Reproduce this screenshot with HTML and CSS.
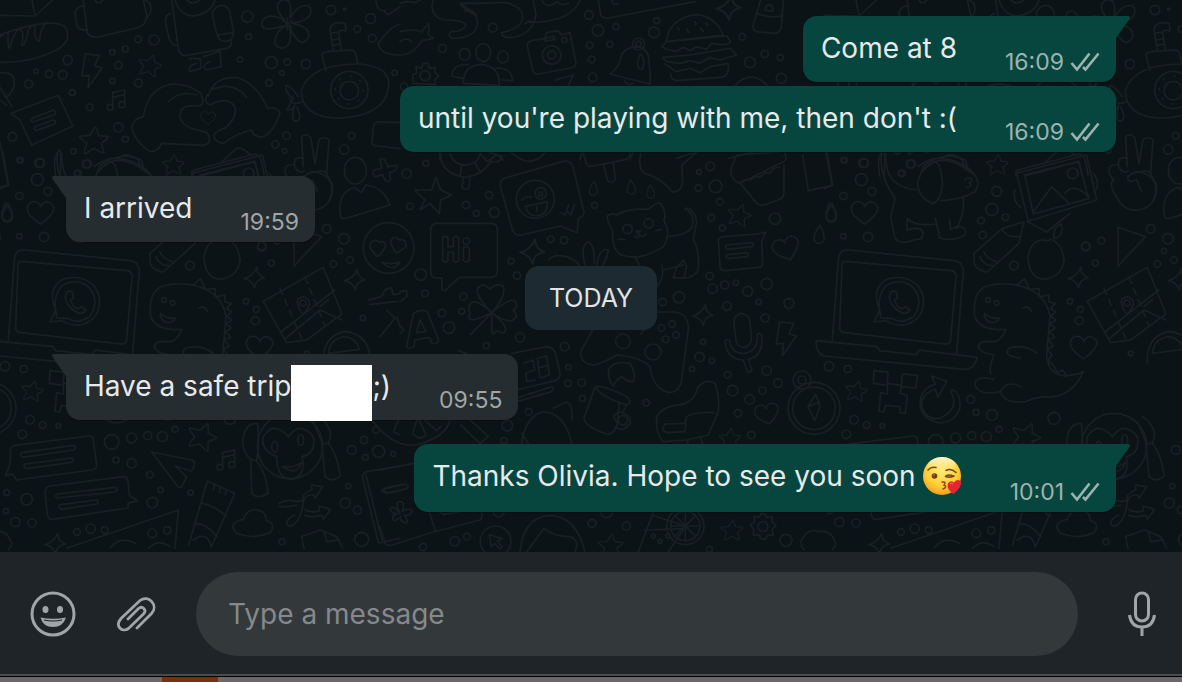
FILE: index.html
```html
<!DOCTYPE html>
<html lang="en">
<head>
<meta charset="utf-8">
<meta name="viewport" content="width=device-width, initial-scale=1">
<title>Chat</title>
<link rel="stylesheet" href="styles.css">
</head>
<body>
<svg class="defs" width="0" height="0" aria-hidden="true">
  <defs>
    <symbol id="ticks" viewBox="0 0 30 20"><path d="M1.5 11l5.500 6.500L19.500 1.500M13 15l2.500 2.500L28.500 1.500" fill="none" stroke="currentColor" stroke-width="2.600"/></symbol>
    <symbol id="tail" viewBox="0 0 14 22"><path d="M14 0H2Q-1 0 .5 3L14 22Z" fill="currentColor"/></symbol>
    <path id="star" d="M4-40Q7-40 14-13L42-10Q46-6 22 10L30 38Q26 42 0 25L-27 42Q-32 38-21 10L-44-8Q-42-14-13-13Z"/>
    <path id="spark" d="M8-32Q8-8 31 0Q4 4 2 30Q-6 6-30 2Q-2-6 8-32Z"/>
    <path id="heart" d="M0 34Q-42 8-40-14Q-36-38-12-32Q-2-28 0-18Q8-34 24-32Q44-24 38-6Q30 14 0 34Z"/>
    <path id="drop" d="M5-26Q22 4 16 20Q8 32-8 26Q-22 10 5-26Z"/>
    <path id="bolt" d="M-16-50L26-46 12-14 34-8-8 52-4 14-26 16Z"/>
    <g id="note"><path d="M-12 20V-22L24-30V12M-12-8L24-16"/><circle cx="-20" cy="22" r="9"/><circle cx="16" cy="14" r="9"/></g>
    <g id="tile">
      <g transform="scale(.3333)">
        <path d="M0 46L105 48 158 0M105 48L96 0M0 105Q150 50 195 80Q220 120 170 150Q90 190 0 187M0 112Q20 90 25 100Q22 140 28 145Q45 90 58 88Q75 90 65 135Q75 140 85 90Q100 70 105 80Q100 120 118 124Q120 90 135 72"/>
        <path d="M250 0L262 100Q275 115 300 110L410 84Q440 78 440 45L430 0M252 18Q220 20 226 50L232 80Q240 92 262 90M435 0Q460 10 450 40L440 55M285 0Q295 18 310 0"/>
        <path d="M515 0L536 150Q540 168 560 166L680 145Q698 140 694 122M512 40Q492 45 498 75L508 118Q520 140 530 136M525 0Q540 46 580 48Q635 40 645 0M560 0Q575 18 600 0M645 25Q670 5 688 30L700 90Q704 118 680 124Q655 125 650 100L638 50Q636 35 645 25M655 105L698 98M568 176H600L604 205 570 214Q560 200 590 190M610 170L660 154 664 200 620 210Q600 200 630 184"/>
        <path d="M855 60Q815 20 845 0Q880-10 870 54Q900 5 930 20Q945 60 875 70Q935 80 925 115Q900 150 868 80Q880 135 850 145Q800 140 848 78Q780 100 786 65Q800 35 855 60M848 62L876 82M876 62L848 84M862 54V90"/>
        <path d="M1135 130Q1170 80 1200 72M1135 130Q1140 165 1200 165M1128 0Q1130 35 1155 32Q1160 50 1175 38L1200 20"/>
        <path d="M904 272Q930 190 1080 192Q1170 200 1166 255Q1160 350 1010 354Q905 350 904 272ZM978 212L966 165Q968 155 990 154L1055 150Q1070 152 1072 192M1000 152L990 85Q1000 62 1035 70Q1040 85 1036 95M1024 150L1016 96Q1020 88 1038 92M992 100L1018 96M996 120L1020 116M998 136L1022 132M896 290Q865 250 858 258Q855 280 880 295Q865 320 862 330Q880 330 884 316Q870 360 888 364Q910 360 890 320M868 296Q880 318 904 306"/>
        <circle cx="1048" cy="270" r="56"/><circle cx="1048" cy="272" r="28"/><circle cx="1048" cy="270" r="42" stroke-dasharray="4 29"/>
        <path d="M430 350Q445 260 520 252Q580 255 605 285Q615 320 595 318Q540 310 540 350Q545 375 575 385L622 398Q640 430 610 436L485 430Q475 455 450 455Q400 420 396 380Q400 355 430 350M505 306Q540 270 590 285M625 288Q640 230 710 232Q770 250 803 325Q835 320 840 340Q820 400 785 412Q760 410 755 390Q710 400 670 430Q640 425 642 405Q650 390 675 385Q710 355 706 325Q690 285 630 314Q610 310 622 284M632 270Q700 240 740 292"/>
        <use href="#heart" transform="translate(625 354) scale(.58)"/>
        <path d="M33 340L175 286 218 378 95 436 60 360ZM98 355L160 330Q175 336 160 346L98 366Q90 362 98 355ZM105 380L160 360Q175 364 160 374L108 392Q98 386 105 380ZM0 218Q50 215 42 260Q30 290 14 292M0 262L36 320M0 300L20 316"/>
        <use href="#bolt" transform="translate(272 212)"/><use href="#note" transform="translate(350 300)"/><use href="#star" transform="translate(282 420)"/><use href="#star" transform="translate(450 195) scale(.8) rotate(14)"/><use href="#star" transform="translate(520 493) scale(.75)"/>
        <path d="M0 425L24 555 0 566M168 530Q155 470 180 448Q185 480 180 530M290 520Q350 440 450 525M355 475Q380 450 415 480L425 510M575 525Q572 510 590 508L765 462Q785 460 792 525M600 525L765 484 774 525M660 490L710 445Q725 440 750 464"/>
        <path d="M910 500L905 410Q918 398 932 412L945 490 957 420Q970 405 987 420L980 520Q1010 570 985 605M910 475Q880 465 884 500Q898 525 912 512M884 495Q850 490 856 520L870 545M930 520Q970 505 980 520"/>
        <ellipse cx="1066" cy="512" rx="33" ry="40"/><path d="M1022 650Q1010 580 1062 562L1085 578 1098 555Q1150 560 1170 615L1035 656Q1022 656 1022 650M1122 510L1145 505 1140 478Q1155 468 1163 500L1190 496Q1194 514 1168 518L1172 540Q1160 556 1148 524L1125 530Q1114 520 1122 510M1200 368L1135 366Q1120 368 1120 382L1116 430Q1118 438 1135 438L1200 446"/>
        <use href="#drop" transform="translate(20 638)"/><use href="#heart" transform="translate(122 638)"/>
        <circle cx="462" cy="120" r="15"/><circle cx="414" cy="118" r="10"/><circle cx="376" cy="147" r="9"/><circle cx="337" cy="157" r="8"/><circle cx="355" cy="196" r="11"/><circle cx="203" cy="180" r="14"/><circle cx="188" cy="224" r="13"/><circle cx="147" cy="222" r="11"/><circle cx="108" cy="214" r="7"/><circle cx="86" cy="252" r="12"/><circle cx="217" cy="278" r="9"/><circle cx="337" cy="242" r="8"/><circle cx="415" cy="249" r="12"/><circle cx="269" cy="322" r="10"/><circle cx="355" cy="382" r="14"/><circle cx="376" cy="418" r="9"/><circle cx="37" cy="410" r="13"/><circle cx="58" cy="481" r="8"/><circle cx="118" cy="489" r="14"/><circle cx="112" cy="539" r="18"/><circle cx="220" cy="454" r="8"/><circle cx="259" cy="492" r="12"/><circle cx="232" cy="520" r="9"/><circle cx="144" cy="574" r="12"/><circle cx="58" cy="588" r="11"/><circle cx="58" cy="709" r="8"/><circle cx="132" cy="711" r="14"/><circle cx="742" cy="50" r="17"/><circle cx="746" cy="110" r="9"/><circle cx="720" cy="178" r="8"/><circle cx="814" cy="188" r="18"/><circle cx="862" cy="186" r="10"/><circle cx="918" cy="192" r="14"/><circle cx="846" cy="219" r="7"/><circle cx="807" cy="249" r="10"/><circle cx="993" cy="30" r="14"/><circle cx="1034" cy="28" r="4"/><circle cx="1112" cy="56" r="15"/><circle cx="1072" cy="87" r="10"/><circle cx="1117" cy="115" r="12"/><circle cx="1184" cy="218" r="8"/><circle cx="860" cy="407" r="11"/><circle cx="826" cy="433" r="11"/><circle cx="854" cy="452" r="7"/><circle cx="1055" cy="407" r="10"/><circle cx="1033" cy="449" r="14"/><circle cx="980" cy="686" r="13"/><circle cx="1032" cy="716" r="16"/><circle cx="785" cy="740" r="13"/><circle cx="832" cy="722" r="10"/>
      </g>
      <g transform="translate(0 240) scale(.3333)">
        <path d="M25 300L44 50Q50 28 75 30L390 62Q418 66 418 95L398 340M62 64L382 92Q398 96 396 110L380 300Q376 314 364 312L62 278Q46 276 47 262L54 76Q55 62 62 64M-24 302L160 320 166 332 278 344 284 330 460 352Q450 390 420 388L0 348Q-24 340-24 302Z"/>
        <path d="M150 246L168 210Q140 150 185 120Q235 98 280 135Q315 180 285 230Q240 275 185 242ZM170 228Q155 165 190 134Q230 112 268 142Q300 185 270 228Q235 255 205 236L170 234ZM200 158Q212 146 218 160L220 174 212 182Q220 204 236 206L244 200 258 210Q252 222 236 220Q198 200 196 172Z"/>
        <path d="M546 268Q530 310 500 305Q465 300 463 322Q470 340 510 345Q495 380 500 402M546 268Q470 275 452 230Q445 150 490 138Q560 120 620 150Q670 175 678 230L668 345Q670 400 720 408Q760 404 778 395Q740 480 655 470Q630 475 600 486Q540 490 530 455Q460 470 452 430Q460 405 510 418M530 455Q545 420 592 440M640 340Q600 310 555 325Q535 350 590 354M482 220Q505 240 526 234Q520 252 495 246Q480 236 482 220M597 204Q612 196 622 214M580 134L602 116 615 146M618 148L645 145 646 166M650 170L674 165 674 185 694 190 680 206 696 215 680 228 696 240 678 252 694 264 676 276 692 290 674 300 688 318 670 326 684 346 672 360 690 378 700 398 716 390 728 408"/>
        <circle cx="492" cy="180" r="7"/><circle cx="518" cy="188" r="7"/>
        <path d="M450 60Q450 90 490 96L585 10 600-55 535-35 450 40ZM468 50Q475 75 510 78M480 36Q490 58 520 66M535-35Q540-15 566-10L590-10M660 0Q620 0 612 50Q615 115 660 118Q715 110 720 60Q715 10 680-2Q670 6 660 0M690-4Q685-40 712-48Q720-10 690-4M882-38L965-10 882 78Z"/>
        <path d="M790 184L970 82 1026 222 920 300 860 308ZM845 274L1004 150M858 294L960 210 1026 240M960 200L985 180"/><path d="M840 145L905 296M915 112L975 256" stroke-dasharray="20 16"/><circle cx="909" cy="189" r="9"/><path d="M909 222Q885 195 895 176Q915 165 928 182Q930 205 909 222"/>
        <use href="#spark" transform="translate(762 114)"/><use href="#spark" transform="translate(1064 120)"/><use href="#heart" transform="translate(779 322)"/>
        <path d="M970 370L970 345Q980 280 1040 274Q1100 285 1110 345L1085 375M985 340Q990 295 1035 290Q1070 295 1078 328ZM1105 180L1145 170Q1155 140 1175 145L1180 165 1200 160M1110 194L1190 184M1160 210L1185 235 1140 290M1190 230L1200 260"/>
        <circle cx="1166" cy="24" r="76"/><path d="M1132 50Q1100 20 1115 5Q1130-5 1137 8Q1152-2 1158 16Q1150 38 1132 50M1190 40Q1165 10 1178-5Q1190-12 1197 0Q1220-5 1218 20ZM1145 66Q1170 76 1200 66Q1180 100 1145 66"/>
        <use href="#star" transform="translate(97 452) scale(.75) rotate(10)"/><path d="M150 392L192 396 190 436 148 430ZM235 402L280 406 276 444 232 440ZM190 430L232 436 228 460 250 466 244 520 228 518 228 500 184 496 180 516 165 514 170 458 190 462Z"/>
        <circle cx="-30" cy="505" r="78"/><circle cx="-30" cy="505" r="64"/><circle cx="-66" cy="420" r="27"/><circle cx="-66" cy="420" r="12"/><path d="M-25 462L-48 500-28 542-12 500ZM-48 500L-12 485"/>
        <path d="M322 408L368 424 342 472 334 448Q292 460 292 500Q310 544 350 534Q400 510 386 466Q376 450 386 450Q410 458 408 505Q390 552 340 548Q280 530 290 475Q300 440 334 432Z"/>
        <path d="M32 640Q26 620 45 616L265 588Q280 586 280 600L290 676Q290 688 275 690L50 720 38 702 16 706Q32 680 32 640M65 638L220 616Q234 622 220 630L68 652Q56 646 65 638M75 672L215 654Q226 660 212 668L78 686Q68 680 75 672M135 760Q134 742 150 738L370 710Q382 710 384 724L388 766 412 782 384 790 384 804 158 838Q144 840 142 822ZM172 762L345 742Q358 748 345 756L172 774Q162 768 172 762M180 794L290 780Q300 786 290 792L184 808Q172 802 180 794"/>
        <use href="#star" transform="translate(607 588) rotate(18)"/><use href="#note" transform="translate(680 660)"/><path d="M455 636L575 660Q588 664 582 680L574 694 526 678 560 712 545 740Q538 745 532 738Z"/>
        <circle cx="870" cy="618" r="98"/><path d="M830 650Q780 630 790 590Q820 540 866 590Q900 540 940 590Q950 640 906 650Q920 700 880 718Q830 720 830 650M848 680Q880 685 904 668Q890 710 848 680M772 550Q730 550 728 610Q735 660 770 662Q780 610 772 550M752 662L755 760Q775 780 804 760Q800 700 770 662M940 545L968 610Q990 620 992 580Q980 540 955 530M966 612L975 710Q1000 730 1020 708Q1015 650 985 608"/>
        <ellipse cx="824" cy="620" rx="9" ry="16"/><ellipse cx="902" cy="600" rx="9" ry="16"/>
        <path d="M622 724L704 760 635 920M622 724L566 915M645 732L640 750M662 740L658 758M680 748L675 765M606 790Q640 795 680 830M584 850Q620 850 650 890M580 900Q620 870 634 920M710 880Q680 850 730 838Q745 800 780 812Q800 820 798 842Q830 850 810 878Q760 900 710 880M838 790Q860 775 890 785L908 782Q905 760 935 750L935 735 968 740 945 775 940 765Q910 760 908 800Q895 860 865 858Q850 840 885 825M838 800Q880 800 890 795M915 810Q940 820 958 812L958 798 992 808 970 838 965 826Q930 835 915 825M200 925L535 810 525 925M905 890L960 870 1010 890 1028 925M905 890L912 925M972 874L980 905 1018 900M330 925Q360 885 405 910M445 925Q475 895 510 920"/>
        <use href="#spark" transform="translate(165 912)"/><path d="M1200 678L1100 695Q1086 700 1088 715L1136 910 1200 895M1098 705L1148 908M1145 750Q1150 742 1200 735M1145 750Q1145 764 1200 752"/>
        <path d="M-60 930Q-78 905-60 890Q-45 865-20 874Q20 870 30 900Q42 910 25 930"/>
        <circle cx="570" cy="77" r="13"/><circle cx="785" cy="18" r="12"/><circle cx="814" cy="69" r="9"/><circle cx="738" cy="184" r="8"/><circle cx="769" cy="208" r="9"/><circle cx="766" cy="242" r="12"/><circle cx="1000" cy="72" r="10"/><circle cx="1050" cy="60" r="10"/><circle cx="1020" cy="33" r="8"/><circle cx="1089" cy="234" r="8"/><circle cx="920" cy="340" r="7"/><circle cx="15" cy="379" r="14"/><circle cx="71" cy="387" r="11"/><circle cx="90" cy="539" r="13"/><circle cx="128" cy="555" r="10"/><circle cx="175" cy="557" r="7"/><circle cx="67" cy="583" r="13"/><circle cx="440" cy="478" r="12"/><circle cx="456" cy="517" r="9"/><circle cx="504" cy="525" r="16"/><circle cx="335" cy="606" r="22"/><circle cx="395" cy="594" r="15"/><circle cx="443" cy="587" r="12"/><circle cx="487" cy="590" r="15"/><circle cx="525" cy="568" r="9"/><circle cx="348" cy="660" r="9"/><circle cx="395" cy="670" r="14"/><circle cx="450" cy="704" r="10"/><circle cx="482" cy="750" r="8"/><circle cx="572" cy="758" r="8"/><circle cx="457" cy="788" r="16"/><circle cx="20" cy="758" r="9"/><circle cx="80" cy="778" r="17"/><circle cx="18" cy="813" r="8"/><circle cx="46" cy="846" r="14"/><circle cx="96" cy="849" r="12"/><circle cx="231" cy="876" r="10"/><circle cx="272" cy="866" r="14"/><circle cx="314" cy="870" r="10"/><circle cx="457" cy="880" r="13"/><circle cx="502" cy="871" r="11"/><circle cx="690" cy="535" r="18"/><circle cx="1128" cy="570" r="10"/><circle cx="1092" cy="600" r="11"/><circle cx="1055" cy="630" r="13"/><circle cx="1136" cy="634" r="18"/><circle cx="1096" cy="652" r="9"/><circle cx="1180" cy="642" r="7"/><circle cx="1045" cy="738" r="8"/><circle cx="1036" cy="789" r="15"/><circle cx="1072" cy="810" r="12"/><circle cx="846" cy="905" r="9"/><circle cx="1085" cy="898" r="21"/>
      </g>
      <g transform="translate(-44 0) scale(.3333)">
        <path d="M68 465L85 572 158 556 140 455M305 460Q295 520 345 595Q340 620 332 650L345 715Q360 735 395 722L425 715Q438 685 405 685L380 690 382 655Q400 680 466 672M466 655L480 715Q520 725 555 705Q565 680 530 680L512 688 508 660M530 685Q555 640 550 592M318 460Q310 560 410 570M415 500Q470 450 560 500Q610 540 585 575Q540 600 482 602M430 500Q480 450 488 550Q480 610 455 610Q415 590 412 550ZM470 476Q510 460 556 480L566 512M555 540Q560 530 575 536Q580 545 568 548Q580 560 560 562"/>
        <use href="#drop" transform="translate(155 635) scale(-1 1)"/><use href="#drop" transform="translate(115 702)"/><path d="M710 520L920 465 950 600 745 664ZM735 528L896 485 926 596 760 642ZM760 635L815 560 865 608M855 580Q880 545 926 590M705 570Q695 600 722 622M740 664L800 696 870 640M940 520Q960 545 948 570"/><circle cx="878" cy="520" r="16"/>
        <path d="M1010 590Q985 560 1000 535M1010 590Q1030 635 1075 630Q1130 620 1130 560Q1120 520 1070 515Q1030 530 1050 545L1070 540 1085 575"/>
        <circle cx="194" cy="481" r="9"/><circle cx="253" cy="489" r="13"/><circle cx="394" cy="492" r="12"/><circle cx="366" cy="520" r="10"/><circle cx="650" cy="574" r="15"/><circle cx="636" cy="628" r="18"/><circle cx="603" cy="662" r="10"/><circle cx="676" cy="652" r="10"/><circle cx="608" cy="705" r="11"/>
      </g>
      <g transform="translate(400 0) scale(.3333)">
        <path d="M100 0Q85 45 130 60Q190 60 198 75Q190 95 155 95Q140 105 155 115Q220 115 230 80Q240 50 210 30L180 10Q240 10 320 8Q380 25 365 65Q350 90 305 98Q305 115 340 112Q400 100 408 45L400 0M180 10Q195 35 230 45M380 65Q430 72 490 50Q530 30 540 0M425 0Q440 30 470 5Q485 20 505 10M0 10L20 5 45 8 60 0M0 95Q40 85 65 95L85 70 88 90Q75 100 100 115L65 122Q40 165 0 165M0 125Q20 110 35 125M195 35Q215 20 228 48M375 72Q385 60 396 65"/>
        <path d="M595 0L602 45Q610 55 625 54L885 5M635 0Q640 20 655 10M798 125L806 95Q830 50 890 44Q945 48 970 105ZM785 140L800 125 980 108 992 125Q985 140 935 130L920 148 890 140 870 152 850 142 830 154 800 148ZM788 172L870 165 990 145 1010 165 960 180 930 172 900 190 870 182 840 190 800 185ZM795 192L830 215 870 205 900 218 930 200 985 190Q990 230 960 232L830 242Q810 238 812 220M833 82L838 90M862 88L866 98M885 65L888 74M902 85L910 94M918 70L924 76"/>
        <use href="#spark" transform="translate(985 24) scale(1.2)"/><path d="M1082 0L1060 75Q1055 95 1080 96L1125 100Q1142 98 1144 80L1150 0M1068 40Q1105 55 1148 48M1096 30Q1095 15 1110 14Q1122 20 1118 34Z"/>
        <path d="M382 140Q380 126 395 122L435 115 440 98 475 92 484 105 510 98 528 190Q526 202 512 204L415 222Q400 222 398 210ZM432 118L462 108 464 118 436 124Z"/><circle cx="455" cy="165" r="28"/><circle cx="455" cy="165" r="12"/><circle cx="493" cy="120" r="8"/>
        <path d="M630 222Q660 200 665 165Q680 140 710 140Q750 145 748 195Q752 230 750 252ZM720 162Q738 170 728 208Q708 208 714 180ZM672 240Q680 260 700 250"/><circle cx="716" cy="132" r="18"/><circle cx="716" cy="132" r="8"/>
        <ellipse cx="250" cy="158" rx="22" ry="27"/><ellipse cx="194" cy="163" rx="16" ry="18"/><ellipse cx="309" cy="171" rx="16" ry="18"/><path d="M190 250Q190 195 245 193Q300 200 298 256ZM190 236L155 228Q160 190 206 194M286 205Q335 200 338 242L305 240M38 225L50 218 48 200 65 205 70 190 85 190 88 205 105 202 104 218 116 228 104 240 106 254 40 250Z"/><circle cx="75" cy="227" r="15"/>
        <path d="M1005 258Q1050 205 1105 258M465 240L520 225 505 258M240 460L262 485 290 465 310 480M120 460V480M545 456L540 480M700 456L690 480M830 475L890 456M985 475L1060 456"/>
        <circle cx="567" cy="45" r="13"/><circle cx="594" cy="91" r="17"/><circle cx="648" cy="80" r="9"/><circle cx="569" cy="136" r="10"/><circle cx="630" cy="133" r="9"/><circle cx="575" cy="178" r="10"/><circle cx="578" cy="232" r="13"/><circle cx="762" cy="97" r="16"/><circle cx="770" cy="62" r="9"/><circle cx="278" cy="83" r="13"/><circle cx="127" cy="145" r="12"/><circle cx="1027" cy="110" r="10"/><circle cx="1050" cy="187" r="16"/><circle cx="1094" cy="162" r="11"/><circle cx="1141" cy="173" r="9"/><circle cx="1144" cy="235" r="15"/><circle cx="12" cy="260" r="11"/>
      </g>
      <g transform="translate(400 150) scale(.3333)">
        <path d="M122 10Q120 70 195 82Q250 75 275 30M150 10Q160 48 200 45Q235 40 242 10M270 8L308 20Q300 40 272 35M190 82L186 112Q196 125 208 112L210 82M185 45L180 78M225 38L240 66M335 8Q390 60 435 8M550 10L560 42Q565 52 580 48L680 28Q692 20 690 5M612 46L622 90Q635 105 646 88L640 40M722 10Q710 70 750 75Q795 95 815 125Q845 130 848 90L845 45 890 8"/>
        <path d="M44 120L95 120 108 82 122 120 155 135 122 150 118 190 90 160 60 180 75 150Z"/><path d="M300 105Q300 90 315 84L490 34Q510 30 518 48L552 185Q552 200 535 205L532 248 480 228 360 256Q345 256 338 242ZM366 150Q380 135 395 142M376 170L442 155Q445 195 410 198Q385 198 376 170M410 185V170M482 188L495 196 506 165M504 186L512 196 524 164"/><circle cx="406" cy="148" r="57"/><circle cx="422" cy="130" r="17"/><circle cx="422" cy="132" r="6"/>
        <path d="M650 195Q680 175 745 178Q770 155 780 160Q800 180 792 212Q815 250 790 290Q720 335 665 315Q635 300 638 245Q615 200 625 195Q640 190 650 195M800 260Q870 255 878 225Q885 190 855 178Q865 165 885 195L890 215 880 270Q900 300 894 360Q880 392 820 382Q825 355 850 330L860 350 852 385M705 320L718 345M785 345Q795 385 770 410M790 360L850 345M705 258Q712 270 720 255Q730 265 740 250M708 244L722 242 715 254ZM655 268L675 268M768 242L784 238"/><circle cx="683" cy="237" r="14"/><circle cx="746" cy="220" r="14"/>
        <use href="#drop" transform="translate(578 114) scale(.8)"/><use href="#drop" transform="translate(696 110) scale(-.8 .8)"/><use href="#drop" transform="translate(754 124) scale(-.75 .75)"/>
        <path d="M995 50Q985 85 1020 100L1140 40Q1165 35 1155 10M995 50L1010 15 1140 5M1020 98L1070 160Q1080 168 1095 164L1140 148Q1154 140 1152 120V45M1022 100Q1040 82 1050 92Q1065 75 1080 82Q1095 65 1110 70Q1120 50 1140 52"/><use href="#star" transform="translate(1018 194) scale(.8) rotate(14)"/>
        <path d="M955 270Q955 262 970 260L1075 252 1098 246 1085 275 1088 340Q1088 352 1075 352L975 362Q962 362 960 350ZM980 285L1055 278Q1066 284 1055 290L982 298Q972 292 980 285ZM982 314L1040 308Q1050 315 1040 320L984 326Q974 320 982 314Z"/><use href="#heart" transform="translate(1160 296) rotate(-18)"/>
        <path d="M92 240Q92 220 112 220H275Q292 222 292 238V365Q292 380 275 382H178L135 422 126 420V384H110Q92 382 92 365ZM128 262Q136 256 144 262V290H160V262Q168 256 176 262V332Q168 340 160 332V306H144V332Q136 340 128 332ZM190 294Q200 286 208 294V332Q200 338 190 332Z"/><circle cx="199" cy="274" r="10"/>
        <use href="#spark" transform="translate(396 306) scale(1.200)"/><path d="M445 330Q460 310 500 320Q530 330 540 350M555 345Q540 285 565 275Q585 285 582 340M590 345Q600 290 625 300Q620 330 608 345"/>
        <path d="M275 488Q200 410 255 405L270 418Q285 398 310 408Q320 440 275 488Q350 425 350 470L340 482Q360 500 335 512Q310 515 275 488Q340 540 305 550L292 542Q275 560 275 540V488Q190 530 210 490Q200 465 220 455Q240 455 275 488L212 554M20 590L40 490Q62 475 82 485L116 570Q110 585 95 580L88 562 45 570 42 590Q25 600 20 590M50 548L60 510 78 545Z"/>
        <path d="M0 425L20 422V440L0 455M0 525L12 540 0 550M578 540L542 605Q540 640 580 645Q610 640 650 615Q720 620 750 650Q760 720 810 728Q840 725 845 690L866 530Q860 490 825 486H765M722 552L740 530"/><circle cx="669" cy="574" r="22"/><circle cx="759" cy="606" r="24"/><circle cx="784" cy="534" r="10"/><circle cx="816" cy="522" r="10"/><circle cx="797" cy="568" r="10"/><circle cx="828" cy="555" r="10"/><use href="#spark" transform="translate(908 496)"/><use href="#bolt" transform="translate(1155 566)"/>
        <path d="M1002 520Q1000 495 1025 490Q1048 495 1050 515L1055 570Q1050 590 1030 592Q1010 590 1008 570ZM975 572Q980 565 988 572Q995 610 1030 610Q1075 605 1072 555Q1080 545 1086 555Q1090 620 1045 628L1056 660Q1050 670 1042 664L1030 630Q980 630 975 572M335 610L440 590Q462 592 468 615L480 670Q480 688 465 692L350 720M350 745L455 710Q465 712 455 725L350 755M372 640L400 630 404 660 378 670 380 695 406 690M412 625L440 618 448 675 420 684ZM416 654L444 646M345 640L350 645"/>
        <path d="M625 660Q640 630 690 640Q710 670 700 695Q680 695 665 680Q640 695 642 710Q625 695 625 660M585 712Q600 700 680 740Q700 760 680 765Q610 745 585 712L552 805Q555 830 620 852Q640 855 650 830L658 760M652 818Q630 795 660 786Q695 795 690 820Q670 850 645 830M670 785L680 765"/><circle cx="669" cy="811" r="14"/>
        <path d="M770 800Q790 768 840 764Q880 760 895 710Q920 685 945 700Q960 740 955 785L925 855 860 870 790 875Q765 850 770 800M795 822L855 820 860 800Q880 785 940 788M795 822Q780 840 800 848L855 845 858 820M864 870L862 890M900 862L910 885"/><use href="#heart" transform="translate(1102 792) rotate(-12) scale(.9)"/><use href="#star" transform="translate(990 865) scale(.75)"/>
        <path d="M365 882Q375 800 430 785Q495 790 515 880M460 775L500 755Q520 765 515 810M365 850L385 880M182 825L240 880M210 810L265 860 240 880M-85 810Q0 920 90 870Q140 850 150 810M-5 812L-20 845 0 855M50 812L38 850Q60 875 78 855L58 812M75 812L110 842 122 830M175 602L202 612"/>
        <circle cx="20" cy="71" r="14"/><circle cx="78" cy="40" r="9"/><circle cx="30" cy="169" r="10"/><circle cx="267" cy="136" r="11"/><circle cx="198" cy="165" r="11"/><circle cx="229" cy="190" r="9"/><circle cx="283" cy="187" r="15"/><circle cx="584" cy="166" r="9"/><circle cx="931" cy="49" r="13"/><circle cx="897" cy="66" r="7"/><circle cx="896" cy="114" r="10"/><circle cx="947" cy="109" r="19"/><circle cx="960" cy="155" r="10"/><circle cx="934" cy="203" r="10"/><circle cx="967" cy="234" r="9"/><circle cx="1125" cy="206" r="17"/><circle cx="452" cy="268" r="10"/><circle cx="492" cy="271" r="11"/><circle cx="333" cy="333" r="9"/><circle cx="351" cy="377" r="11"/><circle cx="62" cy="374" r="17"/><circle cx="75" cy="430" r="10"/><circle cx="190" cy="440" r="11"/><circle cx="185" cy="484" r="9"/><circle cx="126" cy="489" r="11"/><circle cx="147" cy="533" r="17"/><circle cx="360" cy="562" r="14"/><circle cx="259" cy="587" r="9"/><circle cx="494" cy="590" r="13"/><circle cx="929" cy="378" r="11"/><circle cx="938" cy="416" r="14"/><circle cx="974" cy="405" r="12"/><circle cx="1008" cy="398" r="8"/><circle cx="1043" cy="424" r="15"/><circle cx="1100" cy="402" r="17"/><circle cx="981" cy="468" r="13"/><circle cx="1076" cy="456" r="8"/><circle cx="1095" cy="504" r="12"/><circle cx="1167" cy="460" r="15"/><circle cx="837" cy="442" r="17"/><circle cx="788" cy="456" r="11"/><circle cx="909" cy="575" r="8"/><circle cx="899" cy="621" r="14"/><circle cx="936" cy="632" r="8"/><circle cx="876" cy="657" r="8"/><circle cx="983" cy="674" r="10"/><circle cx="998" cy="722" r="16"/><circle cx="1049" cy="748" r="14"/><circle cx="1100" cy="662" r="14"/><circle cx="1134" cy="699" r="13"/><circle cx="1088" cy="722" r="11"/><circle cx="1014" cy="790" r="11"/><circle cx="1054" cy="855" r="11"/><circle cx="739" cy="758" r="10"/><circle cx="505" cy="652" r="8"/><circle cx="504" cy="700" r="10"/><circle cx="545" cy="698" r="11"/><circle cx="547" cy="745" r="9"/><circle cx="386" cy="785" r="10"/><circle cx="322" cy="827" r="16"/><circle cx="312" cy="872" r="9"/>
      </g>
      <g transform="translate(380 400) scale(.3333)">
        <path d="M0 210L102 190M15 266L75 252Q92 258 80 266L22 280Q8 278 15 266M0 380L15 430Q20 438 35 436L160 396 300 360Q308 356 304 335M148 335L166 392M180 335L190 343 240 335M60 340Q40 300 65 306Q75 312 66 334Q95 320 96 335Q90 350 72 345Q90 370 75 368Q60 365 62 350Q40 370 38 355Q40 340 54 342Q20 335 35 322Q45 320 60 340"/><circle cx="347" cy="424" r="46"/><path d="M328 404L366 416 352 424 366 442 358 446 344 430 334 440Z"/>
        <path d="M420 456Q430 350 510 346Q590 350 615 456M440 456L492 385Q520 410 570 410Q600 420 585 456M820 336L775 456M795 390L912 386 865 456M815 345L905 375"/><circle cx="916" cy="378" r="56"/><circle cx="916" cy="378" r="44"/><path d="M916 334V422M872 378H960M885 347L947 409M947 347L885 409"/><circle cx="820" cy="408" r="6"/><circle cx="864" cy="408" r="6"/><circle cx="840" cy="424" r="6"/>
        <use href="#star" transform="translate(692 436) scale(.85)"/><use href="#star" transform="translate(1056 390) scale(.75)"/><path d="M1112 375L1124 366 1122 350 1138 352 1144 340 1156 342 1160 354 1176 350 1176 366 1188 376 1176 388 1180 406 1164 404 1156 418 1142 416 1138 404 1120 406 1122 390Z"/><circle cx="1149" cy="380" r="15"/>
        <circle cx="129" cy="441" r="11"/><circle cx="224" cy="424" r="14"/><circle cx="261" cy="410" r="10"/><circle cx="356" cy="335" r="16"/><circle cx="636" cy="370" r="12"/><circle cx="739" cy="378" r="12"/><circle cx="680" cy="335" r="18"/><circle cx="1218" cy="421" r="18"/><circle cx="988" cy="448" r="9"/>
      </g>
    </g>
  </defs>
</svg>

<main class="chat">
  <svg class="wallpaper" aria-hidden="true"><use href="#tile"/><use href="#tile" x="824"/><use href="#tile" x="1648"/></svg>
  <div class="messages">
    <article class="bubble out tailed">
      <svg class="tail" aria-hidden="true"><use href="#tail"/></svg>
      <p>Come at 8</p>
      <span class="meta"><time>16:09</time><svg class="ticks" role="img" aria-label="Delivered"><use href="#ticks"/></svg></span>
    </article>
    <article class="bubble out next">
      <p>until you're playing with me, then don't :(</p>
      <span class="meta"><time>16:09</time><svg class="ticks" role="img" aria-label="Delivered"><use href="#ticks"/></svg></span>
    </article>
    <article class="bubble in tailed">
      <svg class="tail" aria-hidden="true"><use href="#tail"/></svg>
      <p>I arrived</p>
      <span class="meta"><time>19:59</time></span>
    </article>
    <h2 class="day">TODAY</h2>
    <article class="bubble in tailed">
      <svg class="tail" aria-hidden="true"><use href="#tail"/></svg>
      <p>Have a safe trip<span class="mask"></span>;)</p>
      <span class="meta"><time>09:55</time></span>
    </article>
    <article class="bubble out tailed tall">
      <svg class="tail" aria-hidden="true"><use href="#tail"/></svg>
      <p>Thanks Olivia. Hope to see you soon
        <svg class="emoji" viewBox="0 0 40 40" role="img" aria-label="Face blowing a kiss">
          <defs>
            <radialGradient id="face" cx=".5" cy=".35" r=".68"><stop offset="0" stop-color="#ffea72"/><stop offset=".65" stop-color="#fecb35"/><stop offset="1" stop-color="#ee951a"/></radialGradient>
            <linearGradient id="shine" x2="0" y2="1"><stop offset="0" stop-color="#fff8d6"/><stop offset="1" stop-color="#ffe771" stop-opacity="0"/></linearGradient>
          </defs>
          <circle cx="20" cy="20" r="19" fill="url(#face)"/><ellipse cx="20" cy="10" rx="14" ry="9" fill="url(#shine)"/>
          <circle cx="12.500" cy="20" r="2.800" fill="#6c4310"/><circle cx="11.800" cy="19" r=".8" fill="#b98a3a"/>
          <g fill="none" stroke="#75470e" stroke-linecap="round"><path d="M6 14Q9 10.500 14 11.500M24 14.500Q29 12 34 16.500" stroke-width="1.500"/><path d="M23.500 20.500Q28 22 32 20M24 20Q27 18 31 20" stroke-width="1.600"/><path d="M20 26Q25 25.500 22 29Q26 31 21 33" stroke="#9c3b0c" stroke-width="1.400"/></g>
          <path d="M31.500 38Q24 33 26 27.500Q28.500 23.500 32 26.500Q35 22.500 38.500 25Q41.500 29.500 31.500 38" fill="#e32636"/><path d="M28 28Q29 26 31 28" fill="none" stroke="#fb7780"/>
        </svg>
      </p>
      <span class="meta"><time>10:01</time><svg class="ticks" role="img" aria-label="Delivered"><use href="#ticks"/></svg></span>
    </article>
  </div>
</main>

<form class="composer">
  <button type="button" aria-label="Emoji">
    <svg width="46" height="46" viewBox="0 0 46 46"><circle cx="23" cy="23" r="21" fill="none" stroke="currentColor" stroke-width="3"/><ellipse cx="15.500" cy="18.500" rx="3" ry="3.600" fill="currentColor"/><ellipse cx="30" cy="18.500" rx="3" ry="3.600" fill="currentColor"/><path d="M10.500 26.500Q23 29 36 26.500Q33 36 23 36T10.500 26.500Z" fill="currentColor"/><path d="M14 29Q23 31 32 29" fill="none" stroke="#1f2428" stroke-width="1.200"/></svg>
  </button>
  <button type="button" aria-label="Attach">
    <svg width="40" height="36" viewBox="0 0 40 36" fill="none" stroke="currentColor" stroke-width="2.800" stroke-linecap="round"><path d="M21 32L35.500 17.500C43 9.500 32.500-2 24 4.500L5 22.500C-1.500 30 6 37 12.500 32.500L27.500 18C31.500 13.500 26 9.500 22.500 12.500L12 23"/></svg>
  </button>
  <input type="text" placeholder="Type a message" aria-label="Type a message">
  <button type="button" aria-label="Record voice message">
    <svg width="28" height="46" viewBox="0 0 28 46" fill="none" stroke="currentColor" stroke-width="3"><rect x="7.500" y="2" width="13" height="28" rx="6.500"/><path d="M1.500 24Q3 36 14 36T26.500 24M14 36V45" /></svg>
  </button>
</form>
<div class="shelf"><span class="tab"></span></div>
</body>
</html>
```
FILE: styles.css
```css
* { box-sizing: border-box; }
body {
  margin: 0;
  min-height: 100vh;
  display: flex;
  flex-direction: column;
  overflow: hidden;
  background: #0c1317;
  color: #e7e9ea;
  font-family: Inter, "Liberation Sans", sans-serif;
  font-size: 28px;
}
.defs { position: absolute; }
.chat {
  position: relative;
  flex: 1;
  overflow: hidden;
}
.wallpaper {
  position: absolute;
  inset: 0;
  width: 100%;
  height: 100%;
  fill: none;
  stroke: #192024;
  stroke-width: 5px;
  stroke-linejoin: round;
  stroke-linecap: round;
}
.messages {
  position: relative;
  display: flex;
  flex-direction: column;
  align-items: flex-start;
  gap: 24px;
  padding: 16px 66px 40px;
}
.bubble {
  position: relative;
  display: flex;
  align-items: center;
  gap: 48px;
  height: 66px;
  padding: 0 16px 0 18px;
  border-radius: 14px;
  box-shadow: 0 1px 1px rgba(0, 0, 0, .3);
}
.tall { height: 68px; }
.bubble p {
  display: flex;
  align-items: center;
  height: 34px;
  margin: 0 0 2px;
  color: #e7e9ea;
  line-height: 34px;
  white-space: nowrap;
}
.tall p { margin-bottom: 4px; }
.in { background: #262d30; color: #262d30; }
.out { background: #06463f; color: #06463f; align-self: flex-end; }
.next { margin-top: -20px; }
.in.tailed { border-top-left-radius: 0; }
.out.tailed { border-top-right-radius: 0; }
.tail {
  position: absolute;
  top: 0;
  right: 100%;
  width: 14px;
  height: 22px;
}
.out .tail { right: auto; left: 100%; transform: scaleX(-1); }
.meta {
  display: flex;
  align-items: center;
  gap: 6px;
  align-self: flex-end;
  padding-bottom: 6px;
  color: #a0a6a8;
  font-size: 23px;
  line-height: 28px;
}
.out .meta { color: #9db3b0; }
.ticks { width: 30px; height: 20px; }
.mask {
  width: 81px;
  height: 56px;
  margin-top: 14px;
  background: #fff;
}
.emoji { width: 40px; height: 40px; margin-left: 6px; }
.day {
  align-self: center;
  margin: 0;
  padding: 16px 24px;
  border-radius: 14px;
  background: #1e2a31;
  color: #e2e4e5;
  font-size: 25px;
  font-weight: 400;
  line-height: 32px;
}
.composer {
  display: flex;
  align-items: center;
  gap: 40px;
  padding: 20px 26px 18px 30px;
  background: #1f2428;
  border-bottom: 2px solid #484e50;
}
.composer button {
  display: flex;
  padding: 0;
  border: 0;
  background: none;
  color: #a2a5a7;
}
.composer input {
  flex: 1;
  min-width: 0;
  height: 84px;
  padding: 0 32px;
  border: 0;
  border-radius: 42px;
  background: #33383b;
  color: #e7e9ea;
  font: inherit;
  outline: 0;
}
.composer input::placeholder { color: #85898b; opacity: 1; }
.composer input + button { margin-left: 10px; }
.shelf {
  display: flex;
  height: 6px;
  padding-left: 162px;
  border-top: 1px solid #000;
  background: #6b686a;
}
.tab { width: 56px; background: #7c2f0c; }
```
